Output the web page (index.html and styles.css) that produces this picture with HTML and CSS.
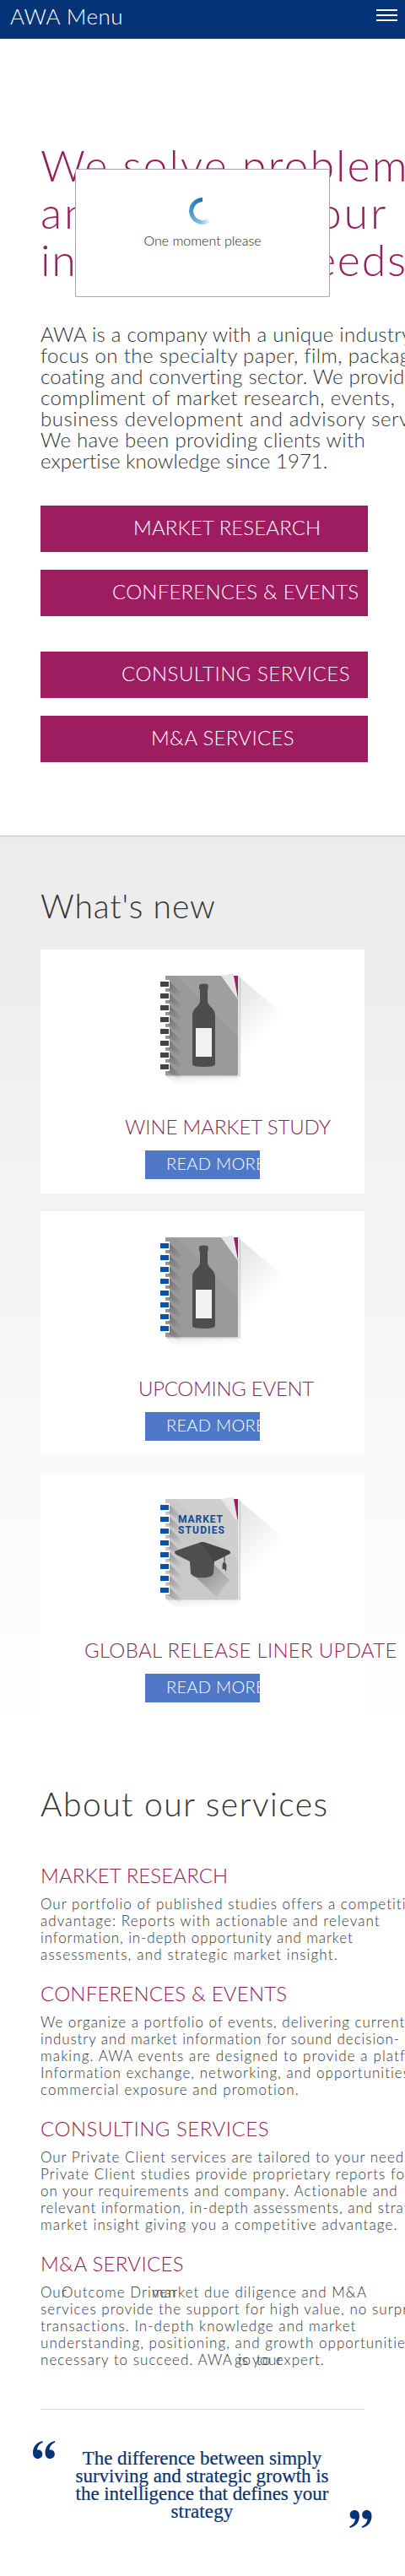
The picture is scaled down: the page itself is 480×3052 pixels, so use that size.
FILE: index.html
```html
<!DOCTYPE html>
<html lang="en">
<head>
<meta charset="utf-8">
<title>AWA</title>
<link rel="stylesheet" href="styles.css">
</head>
<body>
<svg class="defs" width="0" height="0" aria-hidden="true">
  <defs>
    <linearGradient id="cast" gradientUnits="userSpaceOnUse" x1="95" y1="45" x2="135" y2="85">
      <stop offset="0" stop-color="#000" stop-opacity=".1"/>
      <stop offset="1" stop-color="#000" stop-opacity="0"/>
    </linearGradient>
    <linearGradient id="under" x1="0" y1="0" x2=".3" y2="1">
      <stop offset="0" stop-color="#000" stop-opacity=".09"/>
      <stop offset="1" stop-color="#000" stop-opacity="0"/>
    </linearGradient>
    <linearGradient id="ring-shade" x1="0" y1="0" x2="1" y2="1">
      <stop offset="0" stop-color="#000" stop-opacity=".28"/>
      <stop offset="1" stop-color="#000" stop-opacity="0"/>
    </linearGradient>
    <linearGradient id="cap-shade" x1="0" y1="0" x2="1" y2="1">
      <stop offset="0" stop-color="#000" stop-opacity=".35"/>
      <stop offset="1" stop-color="#000" stop-opacity="0"/>
    </linearGradient>
    <g id="cast-shadow">
      <path d="M104 18L154 60V95L104 130Z" fill="url(#cast)"/>
      <path d="M16 134H100L108 145H27Z" fill="url(#under)"/>
      <path d="M17 134H104V18H105V135.500H18Z" fill="#000" opacity=".15"/>
    </g>
    <g id="corner">
      <path d="M82 16L96.500 13.500L97 16L102 16V44Z" fill="#e6e6e6"/>
      <path d="M97 16H102V43Z" fill="#9e1c60"/>
      <path d="M102 16H104V134H102Z" fill="#e4e4e4"/>
    </g>
    <g id="ring">
      <path d="M21 23L34 36V42L16 30V23Z" fill="url(#ring-shade)"/>
      <path d="M16 21H21V31H16Z" fill="#fff"/>
      <path d="M10 23H20V29H10Z" fill="currentColor"/>
    </g>
    <g id="rings">
      <use href="#ring"/><use href="#ring" y="14"/><use href="#ring" y="28"/><use href="#ring" y="42"/>
      <use href="#ring" y="56"/><use href="#ring" y="70"/><use href="#ring" y="84"/><use href="#ring" y="98"/>
    </g>
    <g id="wine-book">
      <use href="#cast-shadow"/>
      <path d="M16 16H102V134H16Z" fill="#999"/>
      <path d="M28 16H102V88Z" fill="#9f9f9f"/>
      <use href="#corner"/>
      <use href="#rings"/>
      <path d="M57 26Q61.500 25 66 26Q67.500 28 66.500 31.500L66 33V46C66 52 75 54 75 63V121Q75 124 61.500 124T48 121V63C48 54 57 52 57 46V33L56 31.500Q55.500 28 57 26Z" fill="#4d4d4d"/>
      <path d="M52 78H71V112H52Z" fill="#f1f1f1"/>
    </g>
  </defs>
</svg>

<header class="topbar">
  <span class="brand">AWA Menu</span>
  <span class="burger"><i></i><i></i><i></i></span>
</header>

<div class="modal">
  <div class="spinner"></div>
  <p class="modal-text">One moment please</p>
</div>

<section class="hero">
  <h1 class="headline"><span>We solve problems</span><span>and answer your</span><span>information needs</span></h1>
  <p class="intro"><span>AWA is a company with a unique industry</span><span>focus on the specialty paper, film, packaging,</span><span>coating and converting sector. We provide a</span><span>compliment of market research, events,</span><span>business development and advisory services.</span><span>We have been providing clients with</span><span>expertise knowledge since 1971.</span></p>
  <nav class="links">
    <a class="link t-market at-market">MARKET RESEARCH</a>
    <a class="link t-conf at-conf">CONFERENCES &amp; EVENTS</a>
    <a class="link t-consult at-consult">CONSULTING SERVICES</a>
    <a class="link t-ma at-ma">M&amp;A SERVICES</a>
  </nav>
</section>

<section class="news">
  <h2 class="title title-news">What's new</h2>
  <article class="card">
    <svg class="book book-dark" width="160" height="160" viewBox="0 0 160 160"><use href="#wine-book"/></svg>
    <h3 class="card-title c-wine">WINE MARKET STUDY</h3>
    <a class="more">READ MORE</a>
  </article>
  <article class="card">
    <svg class="book book-blue" width="160" height="160" viewBox="0 0 160 160"><use href="#wine-book"/></svg>
    <h3 class="card-title c-event">UPCOMING EVENT</h3>
    <a class="more">READ MORE</a>
  </article>
  <article class="card">
    <svg class="book book-blue" width="160" height="160" viewBox="0 0 160 160">
      <use href="#cast-shadow"/>
      <path d="M16 16H102V134H16Z" fill="#c9c9c9"/>
      <path d="M28 16H102V88Z" fill="#cfcfcf"/>
      <use href="#corner"/>
      <use href="#rings" opacity=".999"/>
      <text class="book-label" x="31" y="44" textLength="53">MARKET</text>
      <text class="book-label" x="31" y="57" textLength="55">STUDIES</text>
      <path d="M49 106L73 93L92 112L77 132Z" fill="url(#cap-shade)"/>
      <path d="M27 79Q27 78 29 77L57 67.500Q60 66.500 63 67.500L91 77Q94 78.500 92 81L74 90L73 104C72 111 48 111 46 104L45 90L29 82Q27 81 27 79Z" fill="#4f4f4f"/>
      <path d="M57 67.500Q60 66.500 63 67.500L91 77Q94 78.500 92 81L74 90Z" fill="#454545"/>
      <path d="M86 83V92" stroke="#4a4a4a" stroke-width="1.200"/>
      <path d="M85 91Q88 91 88.500 95L88 102L86 99L83.500 99V95Q83.500 92 85 91Z" fill="#4a4a4a"/>
    </svg>
    <h3 class="card-title c-liner">GLOBAL RELEASE LINER UPDATE</h3>
    <a class="more">READ MORE</a>
  </article>
</section>

<section class="about">
  <h2 class="title title-about">About our services</h2>
  <h3 class="sub t-market">MARKET RESEARCH</h3>
  <p class="copy p-market"><span>Our portfolio of published studies offers a competitive</span><span>advantage: Reports with actionable and relevant</span><span>information, in-depth opportunity and market</span><span>assessments, and strategic market insight.</span></p>
  <h3 class="sub t-conf">CONFERENCES &amp; EVENTS</h3>
  <p class="copy p-conf"><span>We organize a portfolio of events, delivering current</span><span>industry and market information for sound decision-</span><span>making. AWA events are designed to provide a platform</span><span>Information exchange, networking, and opportunities</span><span>commercial exposure and promotion.</span></p>
  <h3 class="sub t-consult">CONSULTING SERVICES</h3>
  <p class="copy p-consult"><span>Our Private Client services are tailored to your needs.</span><span>Private Client studies provide proprietary reports focused</span><span>on your requirements and company. Actionable and</span><span>relevant information, in-depth assessments, and strategic</span><span>market insight giving you a competitive advantage.</span></p>
  <h3 class="sub t-ma">M&amp;A SERVICES</h3>
  <p class="copy p-ma"><span><b class="seg seg-our">Our</b><b class="seg seg-driven">Outcome Driven</b>market due diligence and M&amp;A</span><span>services provide the support for high value, no surprise</span><span>transactions. In-depth knowledge and market</span><span>understanding, positioning, and growth opportunities</span><span><b class="seg seg-awa">necessary to succeed. AWA</b><b class="seg seg-is">is your</b>go to expert.</span></p>
  <hr class="rule">
</section>

<section class="quote">
  <svg class="mark mark-open" width="27" height="22" viewBox="0 0 27 22"><path d="M11 0C4 2 0 7 0 14C0 18.500 2.500 21 5.700 21C9 21 11.300 18.700 11.300 15.500C11.300 12 8.500 10 5 10.500C5.500 6 8 3.500 12 1.500ZM25.500 0C18.500 2 14.500 7 14.500 14C14.500 18.500 17 21 20.200 21C23.500 21 25.800 18.700 25.800 15.500C25.800 12 23 10 19.500 10.500C20 6 22.500 3.500 26.500 1.500Z"/></svg>
  <blockquote class="saying"><span>The difference between simply</span><span>surviving and strategic growth is</span><span>the intelligence that defines your</span><span>strategy</span></blockquote>
  <svg class="mark mark-close" width="27" height="22" viewBox="0 0 27 22"><path transform="rotate(180 13.250 10.500)" d="M11 0C4 2 0 7 0 14C0 18.500 2.500 21 5.700 21C9 21 11.300 18.700 11.300 15.500C11.300 12 8.500 10 5 10.500C5.500 6 8 3.500 12 1.500ZM25.500 0C18.500 2 14.500 7 14.500 14C14.500 18.500 17 21 20.200 21C23.500 21 25.800 18.700 25.800 15.500C25.800 12 23 10 19.500 10.500C20 6 22.500 3.500 26.500 1.500Z"/></svg>
</section>
</body>
</html>
```
FILE: styles.css
```css
* { box-sizing: border-box; }
html { overflow: hidden; }
body {
  position: relative;
  margin: 0;
  width: 480px;
  height: 3052px;
  overflow: hidden;
  background: #fff;
  color: #333;
  font-family: Lato, "Liberation Sans", sans-serif;
  font-weight: 300;
}
h1, h2, h3, p, blockquote { margin: 0; font-weight: 300; }
h1 span, p > span, blockquote span { display: block; white-space: nowrap; }
.defs { position: absolute; }

.topbar {
  display: flex;
  justify-content: space-between;
  align-items: flex-start;
  height: 46px;
  padding: 0 9px 0 12px;
  background: #053377;
  border-bottom: 1px solid #1c3563;
  color: #fff;
}
.brand { font-size: 26px; line-height: 38px; letter-spacing: .5px; }
.burger { display: grid; gap: 4px; width: 25px; margin-top: 11px; }
.burger i { height: 2px; background: #fff; }

.modal {
  position: absolute;
  left: 89px;
  top: 200px;
  width: 302px;
  height: 152px;
  padding-top: 33px;
  border: 1px solid #a6a6a6;
  border-radius: 2px;
  background: #fff;
  text-align: center;
}
.spinner {
  width: 32px;
  height: 32px;
  margin: 0 auto;
  border-radius: 50%;
  background: conic-gradient(transparent 0 138deg, #8fbfe0 185deg, #4a9bcd 260deg, #1b77b3 360deg);
  -webkit-mask: radial-gradient(circle, transparent 10.5px, #000 11px);
  mask: radial-gradient(circle, transparent 10.5px, #000 11px);
}
.modal-text { margin-top: 8px; font-size: 16px; line-height: 22px; letter-spacing: 0; color: #222; }

.hero { height: 944px; padding: 121px 43px 0 48px; }
.headline { font-size: 52px; line-height: 56px; letter-spacing: 2px; color: #971f5d; }
.headline span:nth-child(2) { letter-spacing: 2.77px; }
.headline span:nth-child(3) { letter-spacing: 1.74px; }
.intro { margin-top: 48px; font-size: 24px; line-height: 25px; }
.intro span:nth-child(1) { letter-spacing: .27px; }
.intro span:nth-child(2) { letter-spacing: .37px; }
.intro span:nth-child(3) { letter-spacing: .2px; }
.intro span:nth-child(4) { letter-spacing: .42px; }
.intro span:nth-child(5) { letter-spacing: .57px; }
.intro span:nth-child(6) { letter-spacing: .29px; }
.intro span:nth-child(7) { letter-spacing: .04px; }
.links { display: grid; gap: 21px; width: 388px; margin-top: 41px; }
.link { height: 55px; background: #9e1c60; color: #fff; font-size: 24px; line-height: 52px; white-space: nowrap; }
.link:nth-child(3) { margin-top: 21px; }
.t-market { letter-spacing: .1px; }
.t-conf { letter-spacing: .2px; }
.t-consult { letter-spacing: .5px; }
.t-ma { letter-spacing: .3px; }
.at-market { padding-left: 110px; }
.at-conf { padding-left: 85px; }
.at-consult { padding-left: 96px; }
.at-ma { padding-left: 131px; }

.news {
  display: flex;
  flex-direction: column;
  height: 1072px;
  padding: 59px 48px 0;
  border-top: 1px solid #c2c2c2;
  background: linear-gradient(#ebebeb, #fff);
}
.title { font-size: 39px; line-height: 47px; }
.title-news { letter-spacing: .85px; }
.title-about { letter-spacing: 1.5px; }
.card { height: 289px; margin-top: 21px; padding-top: 15px; background: #fff; }
.title-news + .card { margin-top: 28px; }
.book { display: block; margin-left: 132px; }
.book-dark { color: #444; }
.book-blue { color: #0752ab; }
.book-label { font: 700 12px Roboto, "Liberation Sans", sans-serif; fill: #134a8e; }
.card-title { margin-top: 20px; font-size: 24px; line-height: 29px; color: #8e1f58; white-space: nowrap; }
.c-wine { padding-left: 100px; letter-spacing: -.12px; }
.c-event { padding-left: 116px; letter-spacing: -.3px; }
.c-liner { padding-left: 52px; letter-spacing: .3px; }
.more {
  display: block;
  width: 136px;
  height: 34px;
  margin: 14px 0 0 124px;
  padding-left: 25px;
  overflow: hidden;
  background: #4f79c7;
  color: #fff;
  font-size: 20px;
  line-height: 31px;
  letter-spacing: .3px;
  white-space: nowrap;
}

.about { padding: 52px 48px 0; }
.sub { margin-top: 21px; font-size: 24px; line-height: 29px; color: #8e1f58; }
.title-about + .sub { margin-top: 46px; }
.copy { margin-top: 10px; font-size: 17px; line-height: 20px; letter-spacing: 1.04px; }
.p-market span:nth-child(1) { letter-spacing: 1.02px; }
.p-market span:nth-child(2) { letter-spacing: 1.11px; }
.p-market span:nth-child(3) { letter-spacing: .89px; }
.p-market span:nth-child(4) { letter-spacing: 1.16px; }
.p-conf span:nth-child(1) { letter-spacing: .98px; }
.p-conf span:nth-child(2) { letter-spacing: .91px; }
.p-conf span:nth-child(3) { letter-spacing: 1.11px; }
.p-conf span:nth-child(4) { letter-spacing: 1.01px; }
.p-conf span:nth-child(5) { letter-spacing: 1.08px; }
.p-consult span:nth-child(1) { letter-spacing: .99px; }
.p-consult span:nth-child(2) { letter-spacing: 1.07px; }
.p-consult span:nth-child(3) { letter-spacing: 1px; }
.p-consult span:nth-child(4) { letter-spacing: .97px; }
.p-consult span:nth-child(5) { letter-spacing: 1.11px; }
.seg { display: inline-block; font-weight: 300; }
.seg-our { width: 25px; }
.seg-driven { width: 107px; }
.seg-awa { width: 233px; }
.seg-is { width: 0; margin-right: -3px; letter-spacing: .6px; text-indent: 1px; }
.rule { height: 1px; margin: 48px 0 0; border: 0; background: #d9d9d9; }

.quote { display: flex; justify-content: space-between; height: 104px; margin: 37px 39px 0; color: #0a3270; }
.mark { fill: #053377; flex: none; }
.mark-close { align-self: flex-end; }
.saying { padding: 10px 1px 0 0; font: 400 23px/21px "Liberation Serif", serif; text-align: center; letter-spacing: -.05px; -webkit-text-stroke: .2px #0a3270; }
.saying span:nth-child(4) { letter-spacing: .15px; }
```
